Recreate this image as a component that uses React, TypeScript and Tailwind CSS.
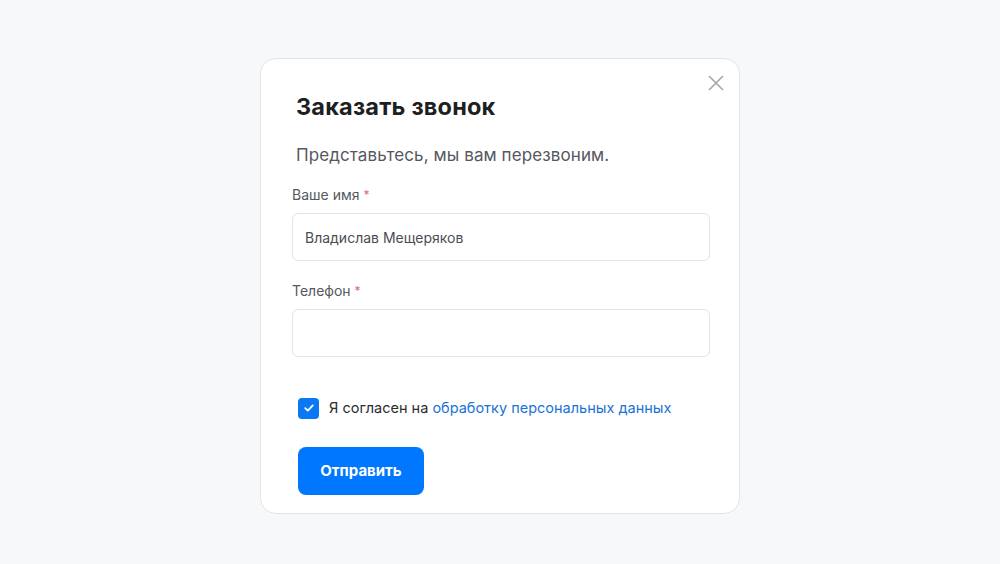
import React from "react";

export default function App() {
  return (
    <div className="min-h-[564px] w-full bg-[#f7f8fa] pt-[58px] flex justify-center" style={{ fontFamily: "Inter, 'Noto Sans', sans-serif" }}>
      <div className="relative w-[480px] h-[456px] bg-white border border-[#e3e5e8] rounded-[16px] pl-[31px] pr-[29px] pt-[34px] pb-[17px] flex flex-col">
        <button className="absolute right-[14px] top-[15px] w-[18px] h-[18px] flex items-center justify-center" aria-label="Закрыть">
          <svg width="16" height="16" viewBox="0 0 16 16" fill="none">
            <path d="M1.5 1.5L14.5 14.5M14.5 1.5L1.5 14.5" stroke="#a3a6ab" strokeWidth="1.6" strokeLinecap="round" />
          </svg>
        </button>
        <h2 className="pl-1 text-[23.5px] leading-[28px] font-bold text-[#1e1f22] tracking-[0.2px]">Заказать звонок</h2>
        <p className="pl-1 mt-[22px] text-[17px] leading-[24px] text-[#55585e] tracking-[0.1px]">Представьтесь, мы вам перезвоним.</p>
        <label className="mt-[18px] text-[14px] leading-[20px] text-[#55585e]">
          Ваше имя <span className="text-[#e06a70] text-[12px] align-top">*</span>
        </label>
        <div className="mt-2 h-12 w-full border border-[#e2e4e7] rounded-[6px] flex items-center px-3 text-[14px] text-[#4a4d52]">
          Владислав Мещеряков
        </div>
        <label className="mt-5 text-[14px] leading-[20px] text-[#55585e]">
          Телефон <span className="text-[#e06a70] text-[12px] align-top">*</span>
        </label>
        <div className="mt-2 h-12 w-full border border-[#e2e4e7] rounded-[6px]"></div>
        <div className="mt-10 ml-[6px] flex items-center h-[22px] gap-[10px]">
          <span className="w-[21px] h-[21px] rounded-[4px] bg-[#0a78f5] flex items-center justify-center">
            <svg width="12" height="12" viewBox="0 0 12 12" fill="none">
              <path d="M2.2 6.2L4.8 8.6L9.8 3.4" stroke="white" strokeWidth="1.8" strokeLinecap="round" strokeLinejoin="round" />
            </svg>
          </span>
          <span className="text-[14.5px] text-[#2b2d31]">
            Я согласен на <span className="text-[#1a73d6]">обработку персональных данных</span>
          </span>
        </div>
        <button className="mt-7 ml-[6px] w-[126px] h-12 rounded-[8px] bg-[#0077ff] text-white text-[15px] font-bold">
          Отправить
        </button>
      </div>
    </div>
  );
}
